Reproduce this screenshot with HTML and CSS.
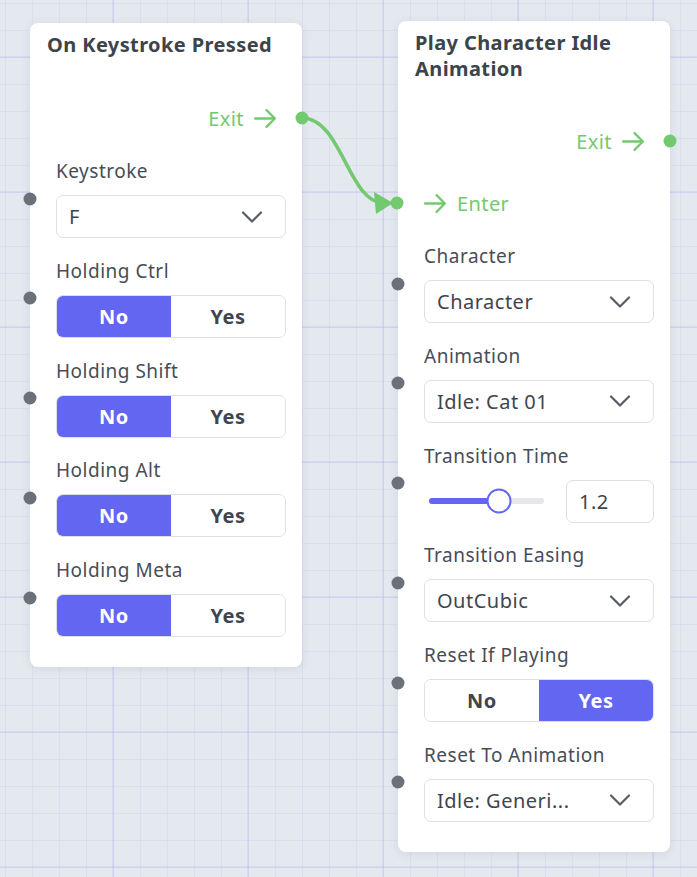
FILE: index.html
```html
<!DOCTYPE html>
<html>
<head>
<meta charset="utf-8">
<link rel="stylesheet" href="styles.css">
</head>
<body>
<div class="canvas">
  <svg class="wires" width="697" height="877" viewBox="0 0 697 877">
    <path d="M302 118 C 342 118, 348 203, 384 203" fill="none" stroke="#72c96f" stroke-width="3.5" stroke-linecap="round"/>
    <path d="M374 192 L393 203 L376 214 Z" fill="#72c96f"/>
  </svg>

  <div class="node node-a">
    <h2 class="node-title">On Keystroke Pressed</h2>
    <div class="flow-row flow-exit">
      <span>Exit</span>
      <svg class="arrow" viewBox="0 0 24 24"><path d="M2 12h19M13 4l8 8-8 8"/></svg>
      <span class="port port-out"></span>
    </div>
    <div class="fields">
      <div class="field">
        <span class="port port-in"></span>
        <div class="label">Keystroke</div>
        <div class="select"><span>F</span><svg class="chev" viewBox="0 0 22 12"><path d="M2 1.5l9 9 9-9"/></svg></div>
      </div>
      <div class="field">
        <span class="port port-in"></span>
        <div class="label">Holding Ctrl</div>
        <div class="toggle"><span class="opt on">No</span><span class="opt">Yes</span></div>
      </div>
      <div class="field">
        <span class="port port-in"></span>
        <div class="label">Holding Shift</div>
        <div class="toggle"><span class="opt on">No</span><span class="opt">Yes</span></div>
      </div>
      <div class="field">
        <span class="port port-in"></span>
        <div class="label">Holding Alt</div>
        <div class="toggle"><span class="opt on">No</span><span class="opt">Yes</span></div>
      </div>
      <div class="field">
        <span class="port port-in"></span>
        <div class="label">Holding Meta</div>
        <div class="toggle"><span class="opt on">No</span><span class="opt">Yes</span></div>
      </div>
    </div>
  </div>

  <div class="node node-b">
    <h2 class="node-title">Play Character Idle Animation</h2>
    <div class="flow-row flow-exit">
      <span>Exit</span>
      <svg class="arrow" viewBox="0 0 24 24"><path d="M2 12h19M13 4l8 8-8 8"/></svg>
      <span class="port port-out"></span>
    </div>
    <div class="flow-row flow-enter">
      <span class="port port-enter"></span>
      <svg class="arrow" viewBox="0 0 24 24"><path d="M2 12h19M13 4l8 8-8 8"/></svg>
      <span>Enter</span>
    </div>
    <div class="fields">
      <div class="field">
        <span class="port port-in"></span>
        <div class="label">Character</div>
        <div class="select"><span>Character</span><svg class="chev" viewBox="0 0 22 12"><path d="M2 1.5l9 9 9-9"/></svg></div>
      </div>
      <div class="field">
        <span class="port port-in"></span>
        <div class="label">Animation</div>
        <div class="select"><span>Idle: Cat 01</span><svg class="chev" viewBox="0 0 22 12"><path d="M2 1.5l9 9 9-9"/></svg></div>
      </div>
      <div class="field">
        <span class="port port-in"></span>
        <div class="label">Transition Time</div>
        <div class="slider-row">
          <div class="slider">
            <div class="track"><div class="fill" style="width:61%"></div><div class="thumb" style="left:61%"></div></div>
          </div>
          <div class="number">1.2</div>
        </div>
      </div>
      <div class="field">
        <span class="port port-in"></span>
        <div class="label">Transition Easing</div>
        <div class="select"><span>OutCubic</span><svg class="chev" viewBox="0 0 22 12"><path d="M2 1.5l9 9 9-9"/></svg></div>
      </div>
      <div class="field">
        <span class="port port-in"></span>
        <div class="label">Reset If Playing</div>
        <div class="toggle"><span class="opt">No</span><span class="opt on">Yes</span></div>
      </div>
      <div class="field">
        <span class="port port-in"></span>
        <div class="label">Reset To Animation</div>
        <div class="select"><span>Idle: Generi...</span><svg class="chev" viewBox="0 0 22 12"><path d="M2 1.5l9 9 9-9"/></svg></div>
      </div>
    </div>
  </div>
</div>
</body>
</html>
```

FILE: styles.css
```css
* { box-sizing: border-box; }
html, body { margin: 0; padding: 0; }
body {
  font-family: "Noto Sans", "Open Sans", sans-serif;
  color: #3e444d;
}
.canvas {
  position: relative;
  width: 697px;
  height: 877px;
  overflow: hidden;
  background-color: #e4e8ef;
  background-image:
    linear-gradient(to right, rgba(160,168,240,0.20) 2px, transparent 2px),
    linear-gradient(to bottom, rgba(160,168,240,0.20) 2px, transparent 2px),
    linear-gradient(to right, rgba(170,178,240,0.16) 1px, transparent 1px),
    linear-gradient(to bottom, rgba(170,178,240,0.16) 1px, transparent 1px);
  background-size: 135px 135px, 135px 135px, 27px 27px, 27px 27px;
  background-position: 112px 0, 0 56px, 5px 0, 0 3px;
}
.wires {
  position: absolute;
  left: 0;
  top: 0;
}
.node {
  position: absolute;
  width: 272px;
  background: #fff;
  border-radius: 8px;
  box-shadow: 0 2px 10px rgba(60, 70, 100, 0.10);
  padding: 9px 0 30px;
}
.node-a { left: 30px; top: 23px; }
.node-b { left: 398px; top: 21px; }

.node-title {
  margin: 0;
  padding: 0 12px 0 17px;
  font-size: 20px;
  line-height: 26px;
  font-weight: 700;
  letter-spacing: 0.4px;
  color: #3d434b;
}
.flow-row {
  position: relative;
  display: flex;
  align-items: center;
  height: 36px;
  color: #72c96f;
  font-size: 20px;
  letter-spacing: 0.4px;
}
.flow-exit {
  margin-top: 42px;
  justify-content: flex-end;
  padding-right: 24px;
  gap: 9px;
}
.node-b .flow-exit { margin-top: 41px; }
.flow-enter {
  margin-top: 26px;
  padding-left: 25px;
  gap: 9px;
}
.arrow {
  width: 25px;
  height: 25px;
  fill: none;
  stroke: #72c96f;
  stroke-width: 2.2;
  stroke-linecap: round;
  stroke-linejoin: round;
}
.port {
  position: absolute;
  width: 13px;
  height: 13px;
  border-radius: 50%;
  top: 50%;
  transform: translate(-50%, -50%);
}
.port-out { left: 100%; background: #72c96f; }
.port-enter { left: 0; background: #72c96f; margin-left: -1px; }
.port-in { left: 0; background: #6b7178; }

.fields {
  padding: 23px 16px 0 26px;
  display: flex;
  flex-direction: column;
  gap: 20.75px;
}
.field {
  position: relative;
  display: flex;
  flex-direction: column;
  gap: 12px;
}
.field .port-in { left: -26px; }
.label {
  font-size: 19px;
  line-height: 24px;
  color: #474d56;
  letter-spacing: 0.5px;
}
.select {
  height: 43px;
  border: 1px solid #dcdfe4;
  border-radius: 7px;
  display: flex;
  align-items: center;
  justify-content: space-between;
  padding: 0 22px 0 12px;
  font-size: 20px;
  color: #3f454e;
  letter-spacing: 0.5px;
}
.chev {
  width: 22px;
  height: 12px;
  fill: none;
  stroke: #575e67;
  stroke-width: 2.2;
  stroke-linecap: round;
  stroke-linejoin: round;
}
.toggle {
  height: 43px;
  display: grid;
  grid-template-columns: 1fr 1fr;
  border: 1px solid #dcdfe4;
  border-radius: 7px;
  overflow: hidden;
}
.opt {
  display: flex;
  align-items: center;
  justify-content: center;
  font-size: 20px;
  font-weight: 700;
  letter-spacing: 0.5px;
  color: #3f454e;
  background: #fff;
}
.opt.on {
  background: #6366f1;
  color: #fff;
}
.slider-row {
  display: flex;
  align-items: center;
  gap: 12px;
  height: 43px;
}
.slider {
  flex: 1;
  padding: 0 10px 0 5px;
}
.track {
  position: relative;
  height: 6px;
  border-radius: 3px;
  background: #e6e7ea;
}
.fill {
  height: 100%;
  border-radius: 3px 0 0 3px;
  background: #6366f1;
}
.thumb {
  position: absolute;
  top: 50%;
  width: 25px;
  height: 25px;
  border-radius: 50%;
  background: #fff;
  border: 2.5px solid #6366f1;
  transform: translate(-50%, -50%);
}
.number {
  width: 88px;
  height: 43px;
  border: 1px solid #dcdfe4;
  border-radius: 7px;
  display: flex;
  align-items: center;
  padding-left: 12px;
  font-size: 20px;
  letter-spacing: 0.5px;
  color: #3f454e;
}
```
